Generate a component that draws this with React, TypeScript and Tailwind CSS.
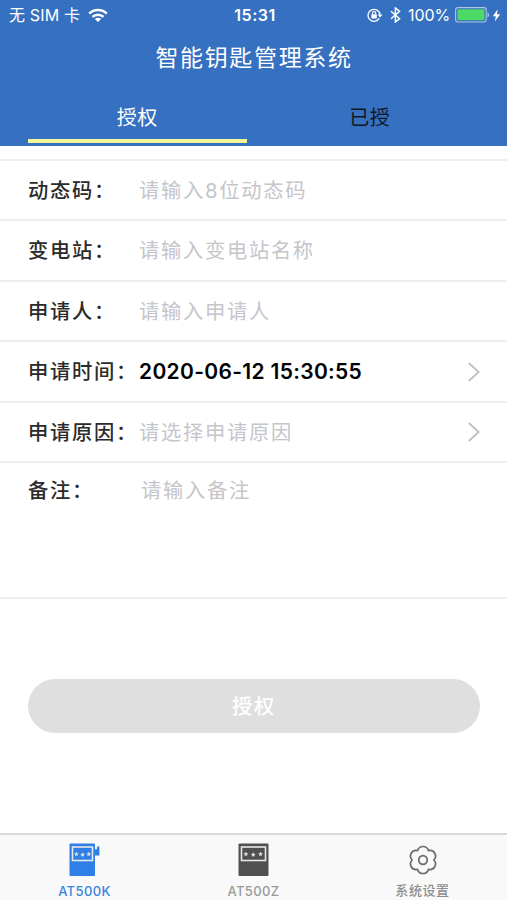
import React from 'react';
import clsx from 'clsx';

interface Field {
  label: string;
  value?: string;
  placeholder?: string;
  arrow?: boolean;
  height: string;
}

const fields: Field[] = [
  { label: '动态码：', placeholder: '请输入8位动态码', height: 'h-[60px]' },
  { label: '变电站：', placeholder: '请输入变电站名称', height: 'h-[61px]' },
  { label: '申请人：', placeholder: '请输入申请人', height: 'h-[60px]' },
  { label: '申请时间：', value: '2020-06-12 15:30:55', arrow: true, height: 'h-[61px]' },
  { label: '申请原因：', placeholder: '请选择申请原因', arrow: true, height: 'h-[60px]' },
];

function WifiIcon() {
  return (
    <svg width="20" height="15" viewBox="0 0 20 15" fill="none" stroke="white" strokeWidth="2.5">
      <path d="M1.2 5.6C6.2 0.7 13.8 0.7 18.8 5.6" />
      <path d="M4.4 8.9C7.6 5.9 12.4 5.9 15.6 8.9" />
      <path d="M10 14L6.8 10.9C8.6 9.3 11.4 9.3 13.2 10.9Z" fill="white" stroke="none" />
    </svg>
  );
}

function RotationLockIcon() {
  return (
    <svg width="16" height="14" viewBox="0 0 16 14" fill="none">
      <path d="M12.2 10.4A6 6 0 1 1 13 6.6" stroke="white" strokeWidth="1.3" />
      <path d="M10.6 6.4H15.6L13.1 9.4Z" fill="white" />
      <rect x="4.4" y="6.2" width="5.4" height="4.2" rx="0.5" fill="white" />
      <path d="M5.5 6.5V5.2a1.6 1.6 0 0 1 3.2 0V6.5" stroke="white" strokeWidth="1.1" />
    </svg>
  );
}

function StatusBar() {
  return (
    <div className="flex h-[30px] items-center px-[9px] text-[16px] text-white">
      <div className="flex flex-1 items-center">
        <span className="whitespace-nowrap tracking-[0.15px]">无 SIM 卡</span>
        <span className="ml-[8px]">
          <WifiIcon />
        </span>
      </div>
      <span className="font-semibold tracking-[0.5px]">15:31</span>
      <div className="-mr-[3px] flex flex-1 items-center justify-end">
        <RotationLockIcon />
        <svg className="ml-[7px]" width="11" height="16" viewBox="0 0 11 16" fill="none" stroke="white" strokeWidth="1.5">
          <path d="M1 4.2L9.6 11.7L5.4 15V1L9.6 4.3L1 11.8" />
        </svg>
        <span className="ml-[7px] tracking-[-0.1px]">100%</span>
        <svg className="ml-[5px]" width="35" height="16" viewBox="0 0 35 16" fill="none">
          <rect x="0.6" y="0.6" width="30.6" height="14.4" rx="2.4" stroke="white" strokeOpacity="0.6" strokeWidth="1.1" />
          <rect x="2.4" y="2.3" width="27" height="11" rx="0.8" fill="#4cd964" />
          <path d="M32.5 5.2C34.6 6 34.6 9.6 32.5 10.4Z" fill="white" fillOpacity="0.6" />
        </svg>
        <svg className="ml-[2px]" width="9" height="13" viewBox="0 0 9 13" fill="white">
          <path d="M5.6 0.5L0.8 7.2H3.8L2.8 12.5L8.2 5.3H5Z" />
        </svg>
      </div>
    </div>
  );
}

function Chevron() {
  return (
    <svg width="14" height="20" viewBox="0 0 14 20" fill="none" stroke="#c2c2c4" strokeWidth="1.9">
      <path d="M1.8 1L11.6 10L1.8 19" />
    </svg>
  );
}

function KeyBoxIcon({ active }: { active?: boolean }) {
  const color = active ? '#2f7fe6' : '#505050';
  const x = active ? -1.5 : -1.5;
  return (
    <svg width="32" height="34" viewBox="-2 0 32 34">
      <rect x={x} y="0.5" width={active ? 25.5 : 30} height="32.5" rx="1" fill={color} />
      {active && <path d="M23.5 6.2H26V3.4H28.4V12.6H23.5Z" fill={color} />}
      <rect x={x + 3} y="4" width={active ? 20 : 24} height="13.5" fill="none" stroke="#e6e8ec" strokeWidth="1.6" />
      <g fill="#dfe3ea">
        {[0, 1, 2].map((i) => (
          <path
            key={i}
            transform={`translate(${x + (active ? 6.9 : 7.4) + i * (active ? 6.2 : 7.3)} ${i === 1 ? 11.6 : 11})`}
            d="M0-2.4L.7-.8 2.4-.7 1.1.5 1.5 2.2 0 1.3-1.5 2.2-1.1.5-2.4-.7-.7-.8Z"
          />
        ))}
      </g>
    </svg>
  );
}

function FlowerIcon() {
  return (
    <svg width="30" height="32" viewBox="-15 -16 30 32" fill="none" stroke="#6c6c6c" strokeWidth="1.7" strokeLinejoin="round">
      <path d="M-5.4-9.4A5.6 5.6 0 0 1 5.4-9.4A5.6 5.6 0 0 1 10.8 0A5.6 5.6 0 0 1 5.4 9.4A5.6 5.6 0 0 1-5.4 9.4A5.6 5.6 0 0 1-10.8 0A5.6 5.6 0 0 1-5.4-9.4Z" />
      <circle r="4.3" />
    </svg>
  );
}

export default function App() {
  return (
    <div className="flex h-[900px] w-[507px] flex-col overflow-hidden bg-white font-['Inter','Noto_Sans_CJK_SC',sans-serif]">
      <header className="h-[146px] shrink-0 bg-[#3670c1]">
        <StatusBar />
        <h1 className="h-[54px] pt-px pl-[1px] text-center text-[23px] leading-[54px] tracking-[1.65px] text-white">智能钥匙管理系统</h1>
        <nav className="flex h-[62px] px-[28px] text-[20px] tracking-[0.4px]">
          <button className="h-[59px] w-[219px] border-b-4 border-[#f2f797] pt-[12px] text-white">授权</button>
          <button className="ml-[14px] h-[59px] w-[219px] pt-[8px] text-[#111820]">已授</button>
        </nav>
      </header>

      <main className="flex flex-1 flex-col text-[20.3px] tracking-[1.7px]">
        <div className="h-[15px] border-b-2 border-[#eeeff0]" />
        {fields.map((field) => (
          <div key={field.label} className={clsx('flex shrink-0 items-center border-b-2 border-[#eeeeee] pr-[26px] pl-[28px]', field.height)}>
            <span className="w-[111px] pt-[2px] whitespace-nowrap font-medium text-[#2b2b2b]">{field.label}</span>
            {field.value ? (
              <span className="flex-1 whitespace-nowrap text-[21px] font-semibold tracking-[0.32px] text-black">{field.value}</span>
            ) : (
              <span className="flex-1 pt-[2px] text-[#c5c5ca]">{field.placeholder}</span>
            )}
            {field.arrow && <Chevron />}
          </div>
        ))}
        <div className="flex h-[136px] shrink-0 items-start border-b-2 border-[#eeeeee] pt-[13px] pl-[28px]">
          <span className="w-[113px] font-medium text-[#2b2b2b]">备注：</span>
          <span className="text-[#c5c5ca]">请输入备注</span>
        </div>
        <button className="mr-[27px] ml-[28px] mt-[80px] h-[54px] rounded-full bg-[#dfdfdf] pt-[2px] font-medium text-white">授权</button>
      </main>

      <footer className="flex h-[67px] shrink-0 border-t-2 border-[#d9d9d9] bg-[#f9f9f9] text-[13px] font-medium">
        <div className="flex flex-1 flex-col items-center pt-[8px] text-[#3a85e0]">
          <KeyBoxIcon active />
          <span className="mt-[6px] leading-[16px] tracking-[0.4px]">AT500K</span>
        </div>
        <div className="flex flex-1 flex-col items-center pt-[8px] text-[#999999]">
          <KeyBoxIcon />
          <span className="mt-[6px] leading-[16px] tracking-[0.4px]">AT500Z</span>
        </div>
        <div className="flex flex-1 flex-col items-center pt-[9px] text-[#8f8f8f]">
          <FlowerIcon />
          <span className="mt-[5px] leading-[18px] tracking-[0.6px]">系统设置</span>
        </div>
      </footer>
    </div>
  );
}
